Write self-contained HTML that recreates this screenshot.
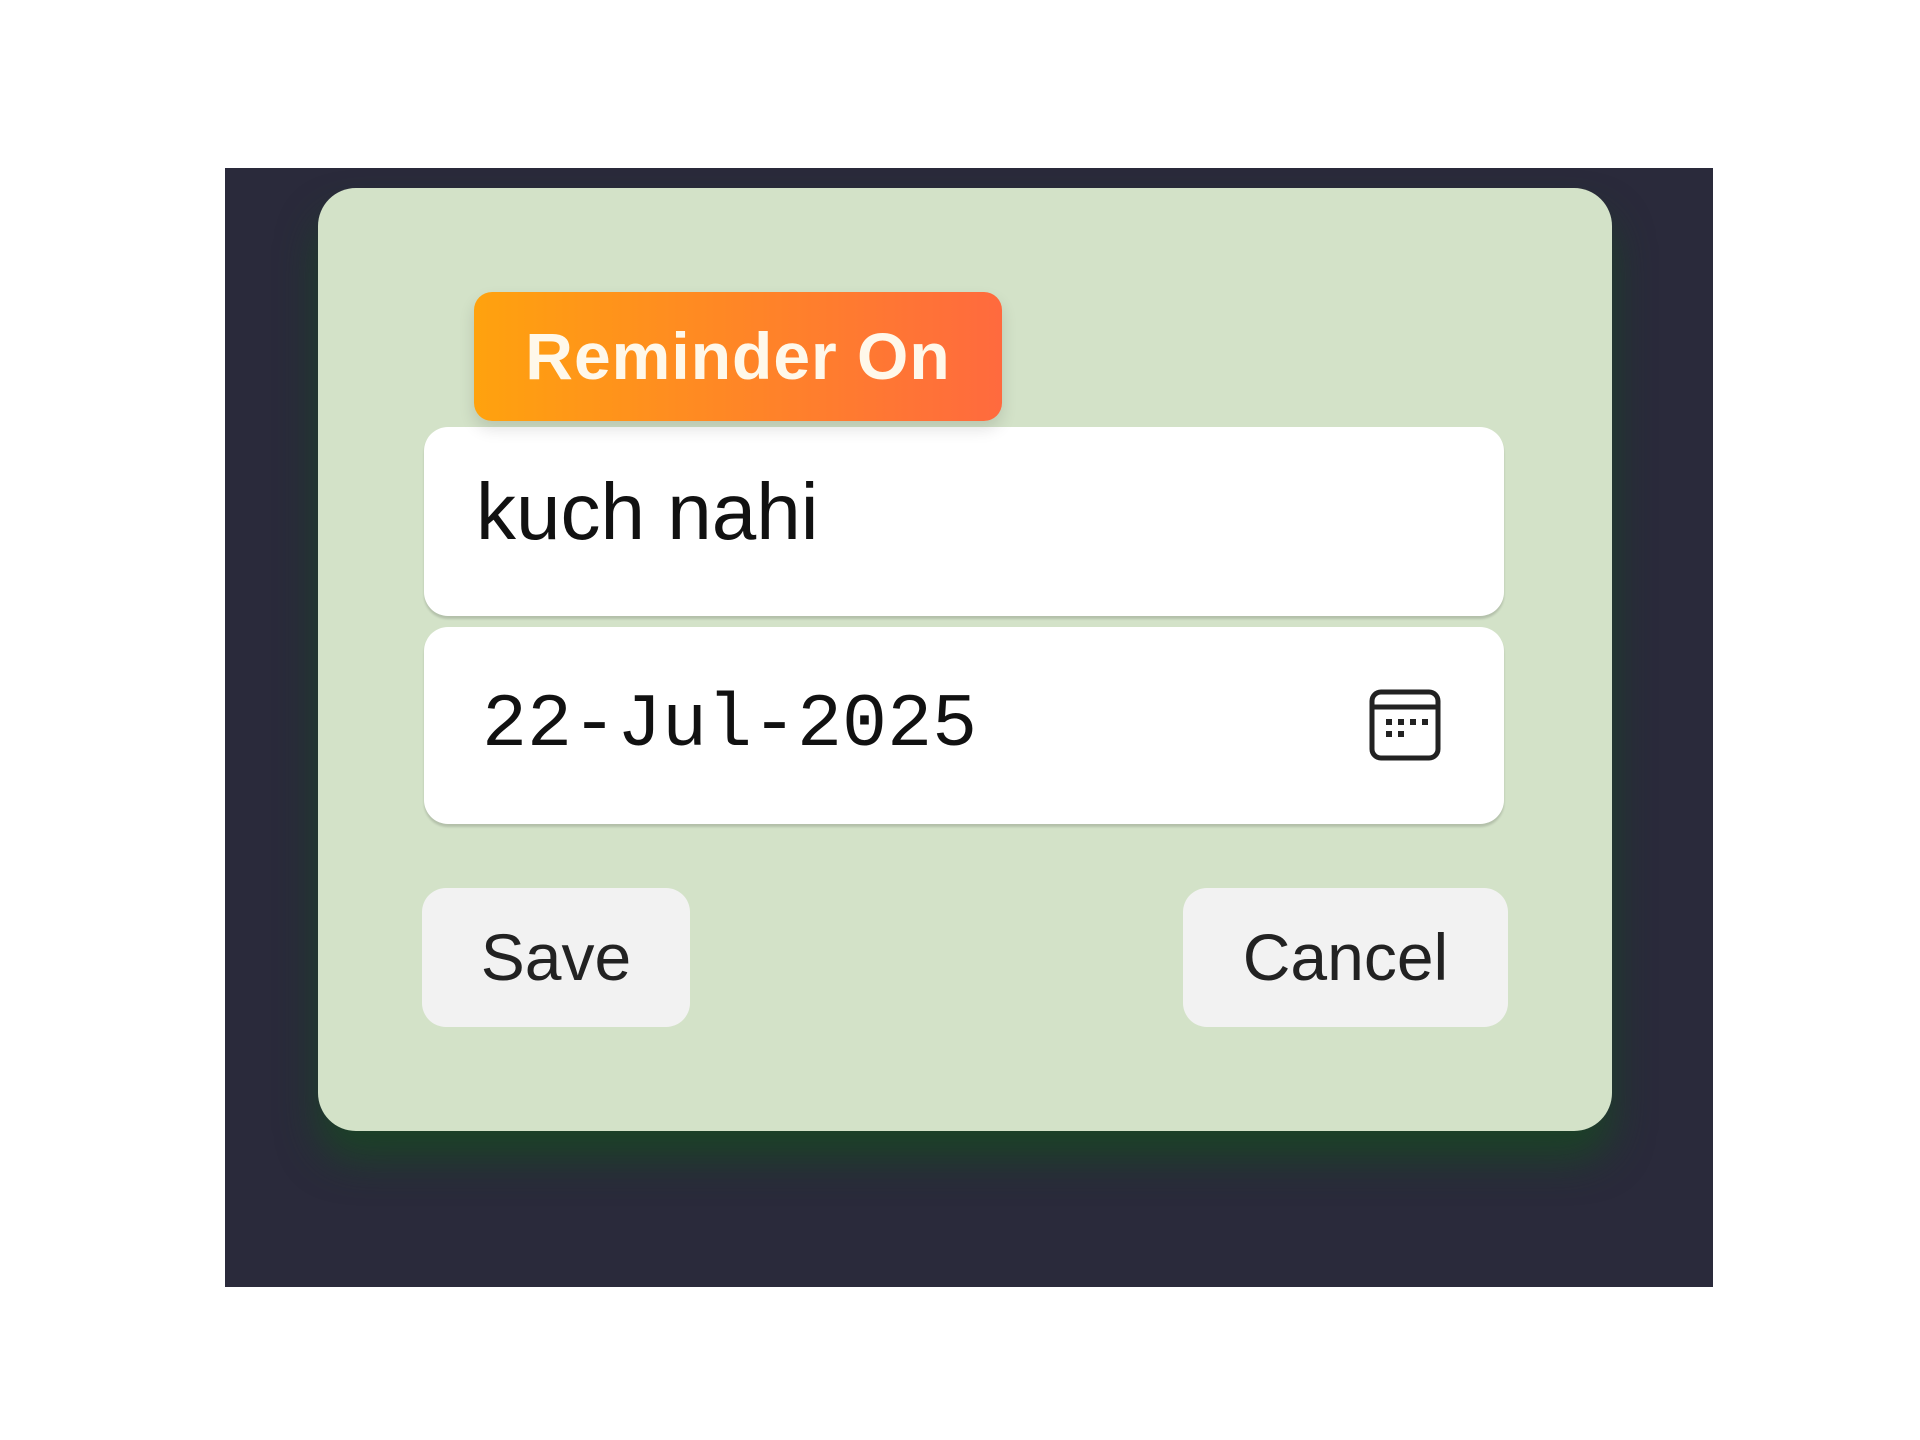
<!DOCTYPE html>
<html><head><style>
body{margin:0;width:1920px;height:1440px;background:#fff;position:relative;overflow:hidden;font-family:"Liberation Sans",sans-serif}
.bg{position:absolute;left:225px;top:168px;width:1488px;height:1119px;background:#2a2a3b;overflow:hidden}
.card{position:absolute;left:93px;top:20px;width:1294px;height:943px;background:#d3e2c8;border-radius:38px;box-shadow:0 28px 40px rgba(25,70,35,.85)}
.badge{position:absolute;left:156px;top:104px;width:528px;height:129px;border-radius:18px;background:linear-gradient(90deg,#ffa20e,#ff6a3e);color:#fff8ea;font-weight:bold;font-size:66px;line-height:129px;text-align:center;box-shadow:0 8px 16px rgba(0,0,0,.12);z-index:2;letter-spacing:1px}
.in{position:absolute;left:106px;width:1080px;background:#fff;border-radius:24px;box-shadow:0 3px 2px rgba(0,0,0,.15)}
.i1{top:239px;height:189px;font-size:80px;line-height:170px;padding-left:52px;box-sizing:border-box;color:#111}
.i2{top:439px;height:197px;font-family:"Liberation Mono",monospace;font-size:75px;line-height:197px;padding-left:58px;box-sizing:border-box;color:#111}
.btn{position:absolute;top:700px;height:139px;background:#f2f2f2;border-radius:24px;font-size:66px;line-height:139px;text-align:center;color:#222}
</style></head><body>
<div class="bg"><div class="card">
<div class="badge">Reminder On</div>
<div class="in i1">kuch nahi</div>
<div class="in i2">22-Jul-2025
<svg style="position:absolute;left:945px;top:62px" width="72" height="72" viewBox="0 0 72 72"><rect x="3" y="3" width="66" height="66" rx="9" fill="none" stroke="#222" stroke-width="5"/><line x1="3" y1="18" x2="69" y2="18" stroke="#222" stroke-width="5"/><g fill="#222"><rect x="17" y="30" width="6" height="6"/><rect x="29" y="30" width="6" height="6"/><rect x="41" y="30" width="6" height="6"/><rect x="53" y="30" width="6" height="6"/><rect x="17" y="42" width="6" height="6"/><rect x="29" y="42" width="6" height="6"/></g></svg></div>
<div class="btn" style="left:104px;width:268px">Save</div>
<div class="btn" style="left:865px;width:325px">Cancel</div>
</div></div>
</body></html>
